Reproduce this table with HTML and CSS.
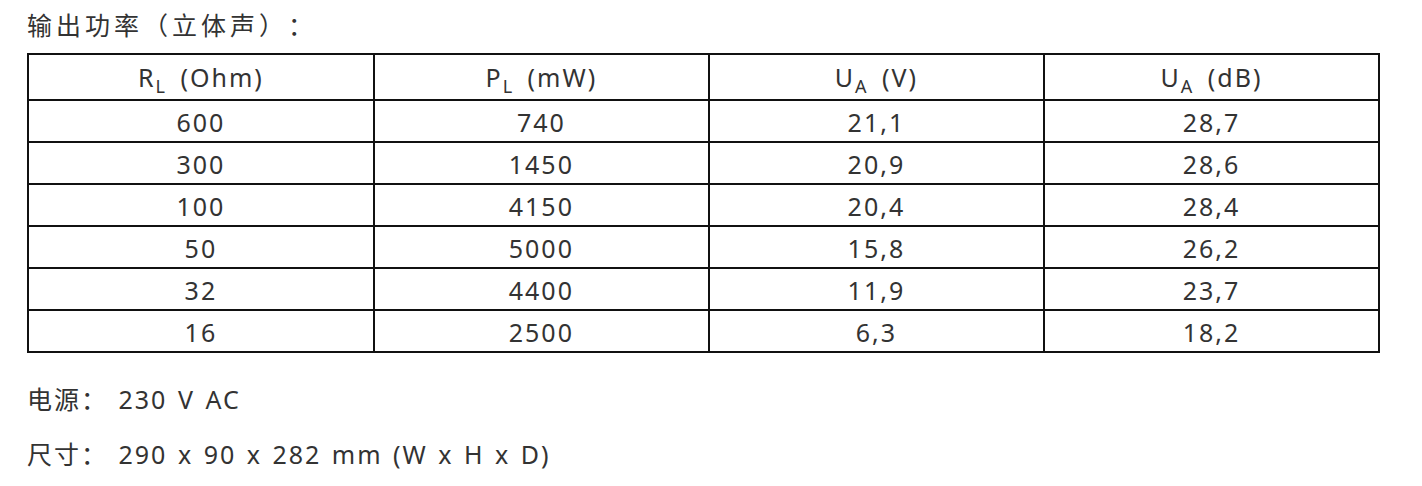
FILE: index.html
```html
<!DOCTYPE html>
<html lang="zh">
<head>
    <meta charset="UTF-8">
    <title>技术参数</title>
    <link rel="stylesheet" href="styles.css">
</head>
<body>
    <div class="specs">
        <p class="title">输出功率（立体声）：</p>
        <table class="power">
            <colgroup>
                <col class="c1"><col class="c2"><col class="c3"><col class="c4">
            </colgroup>
            <tr class="head">
                <td>R<sub>L</sub> (Ohm)</td>
                <td>P<sub>L</sub> (mW)</td>
                <td>U<sub>A</sub> (V)</td>
                <td>U<sub>A</sub> (dB)</td>
            </tr>
            <tr><td>600</td><td>740</td><td>21,1</td><td>28,7</td></tr>
            <tr><td>300</td><td>1450</td><td>20,9</td><td>28,6</td></tr>
            <tr><td>100</td><td>4150</td><td>20,4</td><td>28,4</td></tr>
            <tr><td>50</td><td>5000</td><td>15,8</td><td>26,2</td></tr>
            <tr><td>32</td><td>4400</td><td>11,9</td><td>23,7</td></tr>
            <tr><td>16</td><td>2500</td><td>6,3</td><td>18,2</td></tr>
        </table>
        <p class="line first">电源： 230 V AC</p>
        <p class="line">尺寸： 290 x 90 x 282 mm (W x H x D)</p>
    </div>
</body>
</html>
```

FILE: styles.css
```css
body {
    margin: 0;
    background: #fff;
    color: #333;
    font-family: "Noto Sans", "Noto Sans CJK SC", sans-serif;
    font-size: 25px;
    letter-spacing: 2px;
    word-spacing: 2px;
    text-spacing-trim: space-all;
}

.specs {
    padding: 10px 42px 0 27px;
}

.title {
    margin: 0 0 13px;
    line-height: 30px;
    letter-spacing: 4px;
}

.power {
    width: 100%;
    border-collapse: collapse;
}

.power col.c1 { width: 25.6%; }
.power col.c2,
.power col.c3,
.power col.c4 { width: 24.8%; }

.power td {
    border: 2px solid #111;
    text-align: center;
    height: 38px;
    padding: 2px 0 0;
    line-height: 38px;
}

.power .head td {
    height: 44px;
    padding: 0;
    line-height: 40px;
}

.power sub {
    font-size: 18px;
    line-height: 0;
    vertical-align: -6px;
    margin-right: 3px;
}

.line {
    margin: 0;
    line-height: 55px;
}

.line.first {
    margin-top: 19px;
}
```
